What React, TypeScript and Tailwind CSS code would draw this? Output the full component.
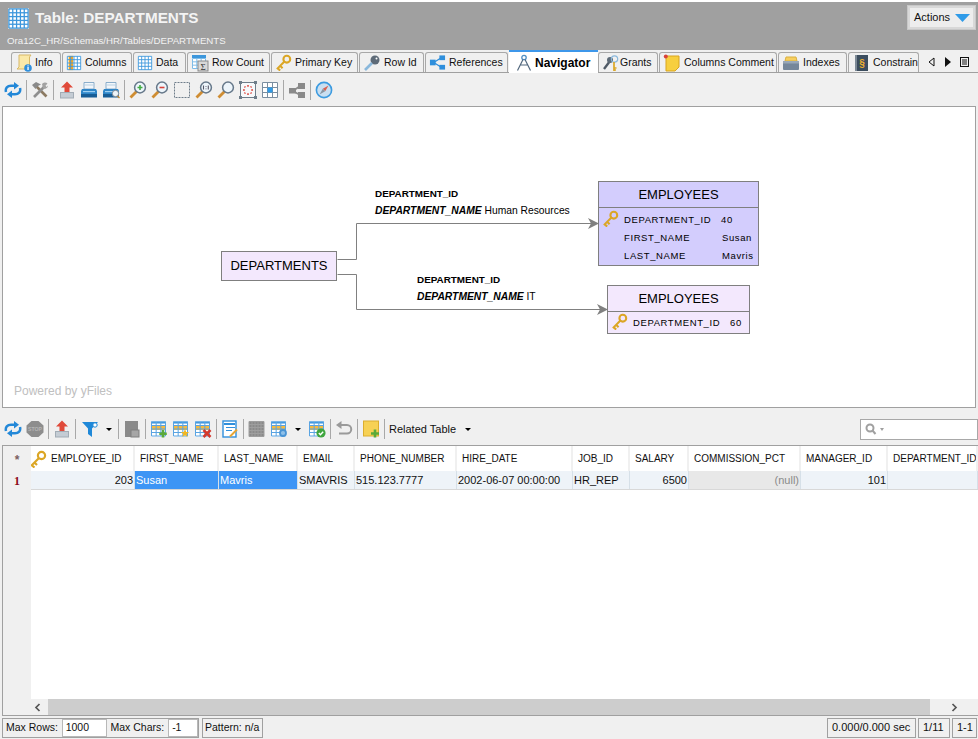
import React from "react";

const font = "font-['Liberation_Sans','Arial',sans-serif]";

function Svg({ s = 18, children }: { s?: number; children: React.ReactNode }) {
  return (
    <svg width={s} height={s} viewBox="0 0 18 18" className="shrink-0">
      {children}
    </svg>
  );
}

function GridLines({ x, y, w, h, nx, ny, c = "#4a9fe0" }: { x: number; y: number; w: number; h: number; nx: number; ny: number; c?: string }) {
  const out: React.ReactNode[] = [];
  for (let i = 0; i <= nx; i++) out.push(<line key={"v" + i} x1={x + (w * i) / nx} x2={x + (w * i) / nx} y1={y} y2={y + h} stroke={c} strokeWidth="1" />);
  for (let i = 0; i <= ny; i++) out.push(<line key={"h" + i} x1={x} x2={x + w} y1={y + (h * i) / ny} y2={y + (h * i) / ny} stroke={c} strokeWidth="1" />);
  return <>{out}</>;
}

const TableIcon = ({ s = 16, n = 4 }: { s?: number; n?: number }) => (
  <Svg s={s}>
    <rect x="1" y="1" width="16" height="16" fill="#fff" />
    <GridLines x={1.5} y={1.5} w={15} h={15} nx={n} ny={n} c="#3d97dc" />
  </Svg>
);
const ColumnsIcon = () => (
  <Svg s={16}>
    <rect x="1" y="1" width="16" height="16" fill="#fff" />
    <rect x="3" y="1" width="5" height="16" fill="#f5a623" />
    <GridLines x={1.5} y={1.5} w={15} h={15} nx={4} ny={4} c="#3d97dc" />
  </Svg>
);
const KeyIcon = ({ s = 18, c = "#dba625" }: { s?: number; c?: string }) => (
  <Svg s={s}>
    <circle cx="12.5" cy="5.5" r="3.6" fill="none" stroke={c} strokeWidth="2.2" />
    <path d="M10 8 L2 16 M2.5 15 L5.5 17.5 M5.5 12.5 L8 15" fill="none" stroke={c} strokeWidth="2.2" />
  </Svg>
);
const InfoIcon = () => (
  <Svg s={18}>
    <path d="M4 1h12l-1.5 2v12H2l2-2z" fill="#fbe9a8" stroke="#d8b868" />
    <circle cx="13" cy="14" r="3.8" fill="#2f8fdc" />
    <rect x="12.4" y="13" width="1.3" height="3" fill="#fff" />
    <rect x="12.4" y="11.4" width="1.3" height="1" fill="#fff" />
  </Svg>
);
const RowCountIcon = () => (
  <Svg s={18}>
    <rect x="1" y="1" width="14" height="14" fill="#fff" />
    <rect x="1" y="1" width="14" height="3" fill="#3d97dc" />
    <GridLines x={1.5} y={4.5} w={13} h={10} nx={3} ny={3} c="#7fbce8" />
    <rect x="7" y="7" width="10" height="10" fill="#d8d8d8" stroke="#8a8a8a" />
    <text x="9.5" y="15.5" fontSize="9" fontFamily="Liberation Serif" fill="#333">Σ</text>
  </Svg>
);
const RowIdIcon = () => (
  <Svg s={18}>
    <circle cx="12" cy="6" r="4.5" fill="#5e6b78" />
    <circle cx="13.5" cy="4.5" r="1" fill="#fff" />
    <path d="M9 9 L2 16" stroke="#8ab8dc" strokeWidth="2.6" />
  </Svg>
);
const RefIcon = () => (
  <Svg s={17}>
    <path d="M5 9 L13 4 M5 9 L13 14" stroke="#2f8fdc" strokeWidth="1.4" />
    <rect x="1" y="6" width="6" height="6" fill="#2f8fdc" />
    <rect x="11" y="1.5" width="6" height="5" fill="#2f8fdc" />
    <rect x="11" y="11.5" width="6" height="5" fill="#2f8fdc" />
  </Svg>
);
const CompassDraw = () => (
  <Svg s={18}>
    <circle cx="9" cy="3.5" r="2.2" fill="none" stroke="#4f8fc4" strokeWidth="1.3" />
    <path d="M8 5.5 L2.5 16.5 M10 5.5 L15.5 16.5 M5 11 H13" fill="none" stroke="#53687e" strokeWidth="1.2" />
  </Svg>
);
const GrantsIcon = () => (
  <Svg s={18}>
    <path d="M8 7 L2 15" stroke="#4f5a66" strokeWidth="2.4" />
    <circle cx="8" cy="6" r="3" fill="#5e6b78" />
    <circle cx="12.5" cy="5" r="3.2" fill="none" stroke="#8ab8dc" strokeWidth="1.2" />
    <path d="M12 8 V17 M12 14h2.5 M12 16h2" stroke="#dba625" strokeWidth="1.7" />
  </Svg>
);
const NoteIcon = () => (
  <Svg s={18}>
    <path d="M3 2h13v11l-4 4H3z" fill="#f7cf3f" stroke="#d9a520" />
    <circle cx="2.8" cy="2.5" r="2" fill="#d9423a" />
  </Svg>
);
const IndexIcon = () => (
  <Svg s={18}>
    <path d="M3 7 L4 3h10l1 4z" fill="#f7cf5f" stroke="#d9b040" />
    <rect x="1" y="7" width="16" height="9" rx="1" fill="#75879a" />
    <rect x="1" y="7" width="16" height="2.5" fill="#98a8b8" />
  </Svg>
);
const ConstraintIcon = () => (
  <Svg s={18}>
    <rect x="3" y="1" width="13" height="16" fill="#3c4d5e" />
    <rect x="3" y="1" width="2" height="16" fill="#7d8a96" />
    <text x="7.3" y="13" fontSize="10" fontWeight="bold" fontFamily="Liberation Sans" fill="#f0b030">§</text>
  </Svg>
);

const Refresh = () => (
  <Svg>
    <path d="M2 11 C1 7 3.5 4.8 7 4.8 H11" fill="none" stroke="#2388d8" strokeWidth="2.5" />
    <path d="M10 1 L15 4.8 L10 8.6Z" fill="#2388d8" />
    <path d="M16 7 C17 11 14.5 13.2 11 13.2 H7" fill="none" stroke="#2388d8" strokeWidth="2.5" />
    <path d="M8 9.4 L3 13.2 L8 17Z" fill="#2388d8" />
  </Svg>
);
const Tools = () => (
  <Svg>
    <path d="M5 5 L15.5 15.5" stroke="#8c7a62" strokeWidth="2.6" />
    <path d="M14 5 L3 16" stroke="#8f8f8f" strokeWidth="2.6" />
    <path d="M1 4 L5 1 L10 3.5 L7 5 L4.5 8Z" fill="#8a8a8a" />
    <path d="M11 3 A3.5 3.5 0 0 1 16.5 2.5 L14.5 4.8 L15.5 6 L17 4.5 A3.5 3.5 0 0 1 12 7.5Z" fill="#a3a3a3" />
  </Svg>
);
const Export = () => (
  <Svg>
    <path d="M9 0.5 L15 6.5 H11.5 V11 H6.5 V6.5 H3Z" fill="#e04a3a" />
    <rect x="2.5" y="11.5" width="13" height="5.5" fill="#c4ccd4" stroke="#a2acb5" />
  </Svg>
);
const Printer = ({ q = false }: { q?: boolean }) => (
  <Svg>
    <path d="M4 1.5 H14 V8 H4Z" fill="#f2f6fa" stroke="#7fa6c6" strokeWidth="0.9" />
    <rect x="4.5" y="3.5" width="9" height="1" fill="#b8cfe2" />
    <path d="M2 8 H16 L17 10 V15.5 H1 V10Z" fill="#2f86c8" />
    <rect x="1" y="13" width="16" height="3.5" fill="#175d96" />
    <rect x="3" y="10" width="12" height="1.2" fill="#9ed0f2" />
    {q && (
      <>
        <circle cx="13.5" cy="12.5" r="3.2" fill="#eef4f8" stroke="#7a8792" strokeWidth="1" />
        <path d="M15.5 15 L17.5 17" stroke="#c98a32" strokeWidth="1.4" />
      </>
    )}
  </Svg>
);
const Mag = ({ k }: { k?: "plus" | "minus" | "one" }) => (
  <Svg>
    <path d="M8 10 L1.5 16.5" stroke="#cf8d33" strokeWidth="2.8" />
    <circle cx="11" cy="6.5" r="5.4" fill="#edf5fb" stroke="#66788a" strokeWidth="1.5" />
    {k === "plus" && <path d="M8.5 6.5h5M11 4v5" stroke="#42ad42" strokeWidth="1.6" />}
    {k === "minus" && <path d="M8.5 6.5h5" stroke="#d9423a" strokeWidth="1.6" />}
    {k === "one" && <path d="M8.5 4.5v4M11 5v.8M11 7.4v.8M13.3 4.5v4" stroke="#556" strokeWidth="1.1" />}
  </Svg>
);
const Marquee = () => (
  <Svg>
    <rect x="1.5" y="1.5" width="15" height="15" fill="none" stroke="#6e7d8a" strokeDasharray="2 1" />
  </Svg>
);
const FitIcon = () => (
  <Svg>
    <rect x="1.5" y="1.5" width="15" height="15" fill="#f7f9fb" stroke="#6e7d8a" />
    <path d="M0 0h3v3H0zM15 0h3v3h-3zM0 15h3v3H0zM15 15h3v3h-3z" fill="#6e7d8a" />
    <path d="M9 4v1.8M9 12.2v1.8M4 9h1.8M12.2 9h1.8M5.5 5.5l.9.9M12.5 5.5l-.9.9M5.5 12.5l.9-.9M12.5 12.5l-.9-.9" stroke="#d9423a" strokeWidth="1.5" />
  </Svg>
);
const CenterIcon = () => (
  <Svg>
    <rect x="1" y="1" width="16" height="16" fill="#fff" />
    <GridLines x={1.5} y={1.5} w={15} h={15} nx={3} ny={3} c="#7b8ea0" />
    <rect x="6.5" y="6.5" width="5" height="5" fill="#2f9be8" />
  </Svg>
);
const GrayRel = () => (
  <Svg>
    <path d="M5 10 L12 5 M5 10 L12 14" stroke="#8a8a8a" strokeWidth="1.6" />
    <rect x="1" y="7" width="7" height="5.5" fill="#8a8a8a" />
    <rect x="10" y="2" width="7" height="6" fill="#8a8a8a" />
    <rect x="10" y="11" width="7" height="6" fill="#8a8a8a" />
  </Svg>
);
const Compass = () => (
  <Svg>
    <circle cx="9" cy="9" r="7.6" fill="#c9dff1" stroke="#3c9be0" strokeWidth="1.6" />
    <path d="M13.5 4.5 L7.8 7.8 L10.2 10.2Z" fill="#d9604f" />
    <path d="M4.5 13.5 L7.8 7.8 L10.2 10.2Z" fill="#8a96a2" />
  </Svg>
);
const Stop = () => (
  <Svg>
    <path d="M5.5 1 H12.5 L17.5 5.5 V12.5 L12.5 17 H5.5 L0.5 12.5 V5.5Z" fill="#8d8d8d" />
    <text x="9" y="11" textAnchor="middle" fontSize="5.2" fontWeight="bold" fontFamily="Liberation Sans" fill="#b5b5b5">STOP</text>
  </Svg>
);
const Filter = () => (
  <Svg>
    <path d="M1 2 H17 L11 8.5 V17 L7 14 V8.5Z" fill="#1f88d8" />
    <circle cx="14" cy="5" r="2.2" fill="#fff" stroke="#1f88d8" strokeWidth="1" />
  </Svg>
);
const GraySave = () => (
  <Svg>
    <rect x="2" y="1" width="13" height="16" fill="#8a8a8a" />
    <rect x="8" y="10" width="8" height="7" fill="#a6a6a6" stroke="#7f7f7f" />
  </Svg>
);
const RowGrid = ({ badge }: { badge: "plus" | "star" | "x" | "gear" | "check" }) => (
  <Svg>
    <rect x="1" y="1.5" width="15" height="15" fill="#fff" />
    <rect x="1" y="1.5" width="15" height="2" fill="#2f8fdc" />
    <rect x="1" y="5.5" width="15" height="4.5" fill="#f7b93c" />
    <GridLines x={1.5} y={2} w={14} h={14} nx={3} ny={4} c="#5aa4e2" />
    {badge === "plus" && <path d="M13 10v7.5M9.3 13.7h7.5" stroke="#5aaa3a" strokeWidth="2.6" />}
    {badge === "star" && <path d="M13 9l1.2 3h3l-2.4 2 .9 3-2.7-1.8L10.3 17l.9-3-2.4-2h3z" fill="#f2b822" />}
    {badge === "x" && <path d="M9.5 10l7 7M16.5 10l-7 7" stroke="#d33a2f" strokeWidth="2.6" />}
    {badge === "gear" && <circle cx="13" cy="13" r="3" fill="#8fc0e8" stroke="#4a94d4" strokeWidth="1.8" />}
    {badge === "check" && (
      <>
        <circle cx="13" cy="13" r="4.6" fill="#3fa63f" />
        <path d="M10.8 13l1.6 1.7 2.8-3" stroke="#fff" strokeWidth="1.4" fill="none" />
      </>
    )}
  </Svg>
);
const ScriptIcon = () => (
  <Svg>
    <rect x="2" y="1" width="13" height="16" fill="#fff" stroke="#2f8fdc" strokeWidth="1.4" />
    <path d="M3 4h11" stroke="#2f8fdc" strokeWidth="2" />
    <path d="M5 7.5h9M5 10.5h6" stroke="#2f8fdc" strokeWidth="1.2" />
    <path d="M9 16.5l7-7" stroke="#e7a532" strokeWidth="2" />
  </Svg>
);
const GrayGrid = () => (
  <Svg>
    <rect x="1" y="1.5" width="15" height="15" fill="#8a8a8a" />
    <GridLines x={1} y={1.5} w={15} h={15} nx={5} ny={5} c="#9e9e9e" />
  </Svg>
);
const Undo = () => (
  <Svg>
    <path d="M5 5 H12 A4.2 4.2 0 0 1 12 13.5 H4" fill="none" stroke="#9a9a9a" strokeWidth="2" />
    <path d="M6.5 1 L1 5 L6.5 9Z" fill="#9a9a9a" />
  </Svg>
);
const NotePlus = () => (
  <Svg>
    <rect x="1.5" y="1" width="15" height="15" fill="#f7d154" stroke="#dcae2e" />
    <path d="M13 9.5v8M9 13.5h8" stroke="#5aaa3a" strokeWidth="2.6" />
  </Svg>
);

const Sep = () => <div className="w-px h-[20px] bg-[#a8a8a8] ml-[2px] mr-[2px] shrink-0" />;
const Slot = ({ children, w = "w-[22px]" }: { children: React.ReactNode; w?: string }) => (
  <div className={`${w} h-[22px] flex items-center justify-center shrink-0`}>{children}</div>
);
const Caret = () => (
  <div className="w-0 h-0 border-l-[3px] border-r-[3px] border-t-[3px] border-l-transparent border-r-transparent border-t-black" />
);

const tabs: { label: string; w: string; icon: React.ReactNode; active?: boolean; gap?: string }[] = [
  { label: "Info", w: "w-[50px]", icon: <InfoIcon />, gap: "gap-[2px]" },
  { label: "Columns", w: "w-[70px]", icon: <ColumnsIcon /> },
  { label: "Data", w: "w-[53px]", icon: <TableIcon /> },
  { label: "Row Count", w: "w-[83px]", icon: <RowCountIcon /> },
  { label: "Primary Key", w: "w-[87px]", icon: <KeyIcon s={17} /> },
  { label: "Row Id", w: "w-[65px]", icon: <RowIdIcon /> },
  { label: "References", w: "w-[83px]", icon: <RefIcon /> },
  { label: "Navigator", w: "w-[89px]", icon: <CompassDraw />, active: true },
  { label: "Grants", w: "w-[60px]", icon: <GrantsIcon />, gap: "gap-0" },
  { label: "Columns Comment", w: "w-[118px]", icon: <NoteIcon /> },
  { label: "Indexes", w: "w-[69px]", icon: <IndexIcon /> },
  { label: "Constrain", w: "w-[71px]", icon: <ConstraintIcon /> },
];

const cols = [
  { h: "EMPLOYEE_ID", v: "203", right: true, w: "w-[104px]" },
  { h: "FIRST_NAME", v: "Susan", sel: true, w: "w-[84px]" },
  { h: "LAST_NAME", v: "Mavris", sel: true, w: "w-[79px]" },
  { h: "EMAIL", v: "SMAVRIS", w: "w-[57px]" },
  { h: "PHONE_NUMBER", v: "515.123.7777", w: "w-[102px]" },
  { h: "HIRE_DATE", v: "2002-06-07 00:00:00", w: "w-[116px]" },
  { h: "JOB_ID", v: "HR_REP", w: "w-[57px]" },
  { h: "SALARY", v: "6500", right: true, w: "w-[59px]" },
  { h: "COMMISSION_PCT", v: "(null)", right: true, nul: true, w: "w-[112px]" },
  { h: "MANAGER_ID", v: "101", right: true, w: "w-[87px]" },
  { h: "DEPARTMENT_ID", v: "", w: "w-[90px]" },
];

const Label = ({ top, left, name, value }: { top: string; left: string; name: string; value: string }) => (
  <div className={`absolute ${top} ${left} text-[10.3px] leading-[17px] text-black whitespace-nowrap`}>
    <div className="font-bold text-[9.9px]">DEPARTMENT_ID</div>
    <div>
      <span className="font-bold italic">{name}</span> {value}
    </div>
  </div>
);

function Status({ children, w, px = "px-[2px]" }: { children: React.ReactNode; w: string; px?: string }) {
  return <div className={`${w} ${px} h-[20px] border border-[#a0a0a0] flex items-center whitespace-nowrap shrink-0`}>{children}</div>;
}

export default function App() {
  return (
    <div className={`${font} w-[978px] h-[739px] overflow-hidden bg-[#f0f0f0] text-[11px] text-[#111] flex flex-col`}>
      <div className="h-[3px] bg-white border-b border-[#a0a0a0] shrink-0" />
      <div className="h-[47px] bg-[#a0a0a0] shrink-0 flex justify-between pl-[7px] pr-[3px]">
        <div className="flex flex-col">
          <div className="flex items-center h-[30px] gap-[5px]">
            <TableIcon s={23} n={5} />
            <span className="font-bold text-[15.3px] text-[#f4f4f4]">Table: DEPARTMENTS</span>
          </div>
          <div className="text-[9.7px] text-[#f2f2f2] leading-[15px]">Ora12C_HR/Schemas/HR/Tables/DEPARTMENTS</div>
        </div>
        <div className="mt-[3px] w-[67px] h-[23px] bg-[#ededed] border-2 border-[#d8d8d8] outline outline-1 outline-[#c8c8c8] flex items-center pl-[4px] gap-[5px]">
          <span>Actions</span>
          <svg width="15" height="8" viewBox="0 0 15 8">
            <path d="M0 0 H15 L7.5 8Z" fill="#2f9be8" />
          </svg>
        </div>
      </div>

      <div className="h-[23px] shrink-0 flex items-end pl-[11px] border-b border-[#a0a0a0] text-[10.5px]">
        {tabs.map((t) =>
          t.active ? (
            <div key={t.label} className={`${t.w} h-[23px] bg-white border-t-2 border-[#3d97ea] flex items-center pl-[6px] gap-[2px] font-bold text-[12px] text-black whitespace-nowrap shrink-0 -mb-px`}>
              {t.icon}
              <span>{t.label}</span>
            </div>
          ) : (
            <div key={t.label} className={`${t.w} h-[20px] mr-px bg-[#f0f0f0] border border-b-0 border-[#a8a8a8] rounded-t-[3px] flex items-center pl-[3px] ${t.gap ?? "gap-[3px]"} whitespace-nowrap overflow-hidden shrink-0 last:mr-0`}>
              {t.icon}
              <span>{t.label}</span>
            </div>
          ),
        )}
        <div className="flex items-center h-[20px] ml-[8px] gap-[9px]">
          <svg width="7" height="10" viewBox="0 0 7 10">
            <path d="M6 1 L1 5 L6 9Z" fill="none" stroke="#111" />
          </svg>
          <svg width="7" height="10" viewBox="0 0 7 10">
            <path d="M1 0 L7 5 L1 10Z" fill="#111" />
          </svg>
          <svg width="9" height="10" viewBox="0 0 9 10">
            <rect x="0.5" y="0.5" width="8" height="9" fill="none" stroke="#111" />
            <path d="M2 3h5M2 5h5M2 7h5" stroke="#111" />
          </svg>
        </div>
      </div>

      <div className="h-[33px] shrink-0 flex items-center pl-[2px]">
        <Slot><Refresh /></Slot>
        <Sep />
        <Slot><Tools /></Slot>
        <Sep />
        <Slot><Export /></Slot>
        <Slot><Printer /></Slot>
        <Slot><Printer q /></Slot>
        <Sep />
        <Slot><Mag k="plus" /></Slot>
        <Slot><Mag k="minus" /></Slot>
        <Slot><Marquee /></Slot>
        <Slot><Mag k="one" /></Slot>
        <Slot><Mag /></Slot>
        <Slot><FitIcon /></Slot>
        <Slot><CenterIcon /></Slot>
        <Sep />
        <Slot><GrayRel /></Slot>
        <Sep />
        <Slot><Compass /></Slot>
      </div>

      <div className="h-[302px] shrink-0 mx-[2px] bg-white border border-[#a0a0a0] relative">
        <svg width="976" height="300" className="absolute left-0 top-0">
          <g fill="none" stroke="#808080" strokeWidth="1">
            <path d="M334.5 152.5 H353.5 V116.5 H590" />
            <path d="M334.5 167.5 H353.5 V202.5 H599" />
          </g>
          <path d="M596 116.5 L585 111 L588 116.5 L585 122Z" fill="#808080" />
          <path d="M605 202.5 L594 197 L597 202.5 L594 208Z" fill="#808080" />
        </svg>
        <Label top="top-[78px]" left="left-[372px]" name="DEPARTMENT_NAME" value="Human Resources" />
        <Label top="top-[164px]" left="left-[414px]" name="DEPARTMENT_NAME" value="IT" />

        <div className="absolute left-[218px] top-[144px] w-[116px] h-[30px] bg-[#f3e8fd] border border-[#7f7f7f] flex items-center justify-center text-[13px] text-black">DEPARTMENTS</div>

        <div className="absolute left-[595px] top-[74px] w-[161px] h-[85px] bg-[#d3cdfd] border border-[#7f7f7f] text-black">
          <div className="h-[26px] border-b border-[#7f7f7f] flex items-center justify-center text-[13px]">EMPLOYEES</div>
          <div className="relative pt-[3px] text-[9.5px] tracking-[0.6px]">
            <div className="absolute left-[3px] top-[2px]"><KeyIcon s={17} /></div>
            <div className="flex h-[18px] items-center pl-[25px]"><span className="w-[97px]">DEPARTMENT_ID</span><span>40</span></div>
            <div className="flex h-[18px] items-center pl-[25px]"><span className="w-[98px]">FIRST_NAME</span><span>Susan</span></div>
            <div className="flex h-[18px] items-center pl-[25px]"><span className="w-[98px]">LAST_NAME</span><span>Mavris</span></div>
          </div>
        </div>

        <div className="absolute left-[604px] top-[178px] w-[143px] h-[49px] bg-[#f3e8fd] border border-[#7f7f7f] text-black">
          <div className="h-[26px] border-b border-[#7f7f7f] flex items-center justify-center text-[13px]">EMPLOYEES</div>
          <div className="relative pt-[2px] text-[9.5px] tracking-[0.6px]">
            <div className="absolute left-[3px] top-[1px]"><KeyIcon s={17} /></div>
            <div className="flex h-[18px] items-center pl-[25px]"><span className="w-[97px]">DEPARTMENT_ID</span><span>60</span></div>
          </div>
        </div>

        <div className="absolute left-[11px] top-[275px] text-[12px] text-[#c0c0c0]">Powered by yFiles</div>
      </div>

      <div className="h-[37px] shrink-0 flex items-center pl-[2px] pt-[5px]">
        <Slot><Refresh /></Slot>
        <Slot><Stop /></Slot>
        <Sep />
        <Slot><Export /></Slot>
        <Sep />
        <Slot w="w-[24px]"><Filter /></Slot>
        <div className="w-[14px] flex justify-center"><Caret /></div>
        <Sep />
        <Slot><GraySave /></Slot>
        <Sep />
        <Slot><RowGrid badge="plus" /></Slot>
        <Slot><RowGrid badge="star" /></Slot>
        <Slot><RowGrid badge="x" /></Slot>
        <Sep />
        <Slot><ScriptIcon /></Slot>
        <Sep />
        <Slot><GrayGrid /></Slot>
        <Slot><RowGrid badge="gear" /></Slot>
        <div className="w-[16px] flex justify-center"><Caret /></div>
        <Slot><RowGrid badge="check" /></Slot>
        <Sep />
        <Slot><Undo /></Slot>
        <Sep />
        <Slot><NotePlus /></Slot>
        <Sep />
        <span className="ml-[2px] w-[76px] whitespace-nowrap">Related Table</span>
        <Caret />
        <div className="ml-auto w-[118px] h-[21px] bg-white border border-[#a8a8a8] flex items-center pl-[4px] gap-[1px]">
          <svg width="14" height="12" viewBox="0 0 14 12">
            <circle cx="5" cy="5" r="3.5" fill="none" stroke="#a0a0a0" strokeWidth="2" />
            <path d="M7.5 7.5 L10.5 11" stroke="#a0a0a0" strokeWidth="2" />
          </svg>
          <div className="w-0 h-0 border-l-[2.5px] border-r-[2.5px] border-t-[3px] border-l-transparent border-r-transparent border-t-[#a0a0a0]" />
        </div>
      </div>

      <div className="h-[271px] shrink-0 ml-[2px] bg-white border border-r-0 border-[#a0a0a0] flex flex-col">
        <div className="flex-1 flex min-h-0">
          <div className="w-[28px] shrink-0 bg-[#f0f0f0] flex flex-col items-center">
            <div className="h-[25px] pt-[6px] font-bold text-[12px] leading-[16px] text-[#7a6060]">*</div>
            <div className="h-[19px] flex items-center font-bold text-[12px] text-[#8b0a1a] font-['Liberation_Serif',serif]">1</div>
          </div>
          <div className="flex-1 min-w-0 overflow-hidden">
            <div className="flex h-[25px] text-[10px]">
              {cols.map((c, i) => (
                <div key={c.h} className={`${c.w} shrink-0 border-r-2 border-[#f0f0f0] bg-white flex items-center whitespace-nowrap overflow-hidden ${i === 0 ? "pl-0" : "pl-[5px]"}`}>
                  {i === 0 && <div className="mr-[4px] -ml-[2px]"><KeyIcon s={18} /></div>}
                  <span>{c.h}</span>
                </div>
              ))}
            </div>
            <div className="flex h-[19px] border-b border-[#d8d8d8]">
              {cols.map((c) => (
                <div
                  key={c.h}
                  className={`${c.w} shrink-0 border-r border-[#d6e0e8] flex items-center whitespace-nowrap overflow-hidden px-px ${c.right ? "justify-end" : ""} ${c.sel ? "bg-[#3d95f5] text-white" : c.nul ? "bg-[#e8e8e8] text-[#8a8a8a]" : "bg-[#eef3f8] text-[#111]"}`}
                >
                  {c.v}
                </div>
              ))}
            </div>
          </div>
        </div>
        <div className="h-[16px] shrink-0 flex items-center bg-[#f0f0f0]">
          <div className="w-[45px] flex justify-end pr-[7px]">
            <svg width="7" height="9" viewBox="0 0 7 9">
              <path d="M5.5 1 L2 4.5 L5.5 8" fill="none" stroke="#555" strokeWidth="1.7" />
            </svg>
          </div>
          <div className="h-full w-[882px] bg-[#cdcdcd]" />
          <div className="flex-1 flex justify-center">
            <svg width="7" height="9" viewBox="0 0 7 9">
              <path d="M1.5 1 L5 4.5 L1.5 8" fill="none" stroke="#555" strokeWidth="1.7" />
            </svg>
          </div>
        </div>
      </div>

      <div className="flex-1 flex items-center pl-[2px] pr-[1px]">
        <div className="h-[20px] w-[197px] border border-[#a0a0a0] flex items-center shrink-0 pl-[3px] whitespace-nowrap text-[10.5px]">
          <span className="w-[56px]">Max Rows:</span>
          <div className="w-[46px] h-[18px] bg-white border border-[#b8b8b8] flex items-center pl-[3px]">1000</div>
          <span className="ml-[3px] w-[58px]">Max Chars:</span>
          <div className="w-[30px] h-[18px] bg-white border border-[#b8b8b8] flex items-center pl-[3px]">-1</div>
        </div>
        <div className="ml-[3px] text-[10.5px]"><Status w="w-[61px]">Pattern: n/a</Status></div>
        <div className="ml-auto flex gap-[2px]">
          <Status w="w-[89px]" px="pl-[4px]">0.000/0.000 sec</Status>
          <Status w="w-[32px]" px="pl-[4px]">1/11</Status>
          <Status w="w-[25px]" px="pl-[4px]">1-1</Status>
        </div>
      </div>
    </div>
  );
}
